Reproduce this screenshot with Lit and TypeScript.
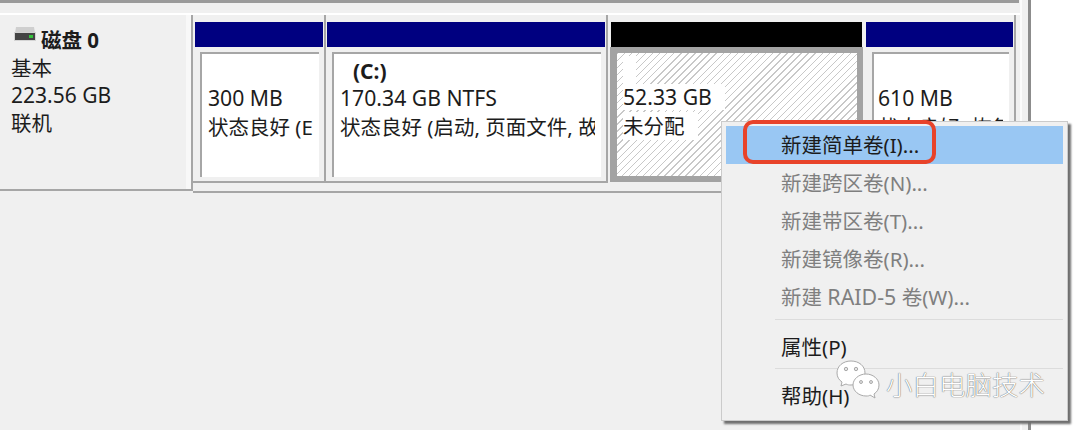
import { LitElement, html, css, nothing } from "lit";
import { customElement } from "lit/decorators.js";

interface Particao {
  classe: string;
  nome?: string;
  tamanho: string;
  estado: string;
}

const PARTICOES: Particao[] = [
  { classe: "p1", tamanho: "300 MB", estado: "状态良好 (EFI" },
  { classe: "p2", nome: "(C:)", tamanho: "170.34 GB NTFS", estado: "状态良好 (启动, 页面文件, 故障" },
  { classe: "p3 livre", tamanho: "52.33 GB", estado: "未分配" },
  { classe: "p4", tamanho: "610 MB", estado: "状态良好 (恢复" },
];

const MENU_NOVO = [
  { texto: html`新建简单卷(I)...`, ativo: true },
  { texto: html`新建跨区卷(N)...`, ativo: false },
  { texto: html`新建带区卷(T)...`, ativo: false },
  { texto: html`新建镜像卷(R)...`, ativo: false },
  { texto: html`新建 <span class="lat">RAID-5</span> 卷(W)...`, ativo: false },
];

@customElement("app-root")
export class AppRoot extends LitElement {
  static styles = css`
    :host {
      display: block;
      width: 1080px;
      height: 430px;
      overflow: hidden;
      background: #fff;
      font-family: "Noto Sans", "Noto Sans CJK SC", sans-serif;
      font-size: 20.5px;
      color: #1c1c1c;
    }

    .janela {
      position: relative;
      box-sizing: border-box;
      width: 1031px;
      height: 430px;
      background: #f0f0f0;
      border-right: 3px solid #8c8c8c;
    }

    .area {
      box-sizing: border-box;
      width: 1022px;
      height: 430px;
      border-right: 2px solid #fbfbfb;
    }

    .topo {
      height: 3px;
      width: 1019px;
      background: #9a9a9a;
    }

    .faixa {
      height: 2px;
      margin-top: 10px;
      background: #fff;
    }

    .disco {
      display: flex;
      align-items: flex-start;
    }

    .info {
      box-sizing: border-box;
      width: 193px;
      height: 176px;
      padding: 11px 0 0 11px;
      border-right: 2px solid #a6a6a6;
      border-bottom: 2px solid #a6a6a6;
      line-height: 28px;
      box-shadow: inset -5px 0 0 #f8f8f8;
    }

    .titulo {
      display: flex;
      align-items: center;
      height: 28px;
      margin-left: 3px;
      font-weight: 700;
      gap: 5px;
    }

    .titulo svg {
      margin-top: -12px;
    }

    .info .num {
      height: 28px;
      margin-top: -1px;
      font-size: 21px;
    }

    .lista {
      display: flex;
      width: 827px;
      height: 176px;
      border-bottom: 2px solid #a6a6a6;
    }

    .particao {
      box-sizing: border-box;
      height: 168px;
      padding-top: 7px;
      border-bottom: 2px solid #a6a6a6;
    }

    .p1 {
      width: 133px;
      padding-left: 2px;
      padding-right: 1px;
      border-right: 2px solid #a6a6a6;
    }

    .p2 {
      width: 282px;
      padding-left: 1px;
      padding-right: 1px;
      border-right: 2px solid #a6a6a6;
    }

    .p3 {
      width: 254px;
      margin-left: 2px;
      padding-left: 1px;
      padding-right: 2px;
    }

    .p4 {
      width: 152px;
      padding-left: 2px;
      padding-right: 1px;
      border-right: 2px solid #a6a6a6;
    }

    .cabeca {
      height: 25px;
      background: #000080;
    }

    .livre .cabeca {
      background: #000;
    }

    .corpo {
      box-sizing: border-box;
      height: 136px;
      padding: 5px 4px 6px 5px;
    }

    .p4 .corpo {
      padding-left: 6px;
    }

    .livre {
      border-bottom: 0;
    }

    .livre .corpo {
      height: 135px;
      margin-left: -1px;
      margin-right: -1px;
      padding: 6px 6px 6px 7px;
      background: #a3a3a3;
    }

    .miolo {
      box-sizing: border-box;
      height: 125px;
      padding: 3px 0 0 6px;
      white-space: nowrap;
      line-height: 28px;
      background: #fff;
      border-top: 2px solid #a6a6a6;
      border-left: 2px solid #a6a6a6;
    }

    .p4 .miolo {
      padding-left: 4px;
    }

    .livre .miolo {
      height: 123px;
      border: 0;
      padding: 3px 0 0 6px;
      background: repeating-linear-gradient(
        135deg,
        #c8c8c8 0,
        #c8c8c8 1px,
        #fff 1px,
        #fff 5px
      );
    }

    .linha {
      height: 28px;
      margin-right: 6px;
      overflow: hidden;
    }

    .nome {
      padding-left: 13px;
      font-size: 21px;
      font-weight: 700;
    }

    .livre .nome {
      padding-left: 0;
    }

    .tam {
      height: 26px;
      margin-bottom: 2px;
      overflow: visible;
      line-height: 26px;
      font-size: 21.2px;
    }

    .livre .tam {
      height: 28px;
      margin-bottom: 0;
    }

    .livre .linha span {
      display: inline-block;
      padding-right: 13px;
      background: #fff;
    }

    .vazio {
      display: block;
      width: 13px;
      height: 28px;
      background: #fff;
    }

    .menu {
      position: absolute;
      left: 721px;
      top: 121px;
      box-sizing: border-box;
      width: 347px;
      height: 300px;
      padding: 4px;
      background: #f0f0f0;
      border: 1px solid #cbcbcb;
      box-shadow: 3px 3px 2px #6f6f6f;
    }

    .item {
      height: 38px;
      padding-left: 55px;
      line-height: 38px;
      white-space: nowrap;
    }

    .item.off {
      color: #7f7f7f;
    }

    .item.on {
      background: #99c7f3;
    }

    .lat {
      font-size: 21.4px;
    }

    .sep {
      height: 1px;
      margin: 3px 0 8px 49px;
      background: #dcdcdc;
    }

    .sep.ultimo {
      margin-top: 2px;
    }

    .realce {
      position: absolute;
      left: 21px;
      top: -2px;
      box-sizing: border-box;
      width: 193px;
      height: 44px;
      border: 4px solid #e8432a;
      border-radius: 10px;
    }

    .marca {
      position: absolute;
      left: 836px;
      top: 360px;
      display: flex;
      align-items: flex-start;
      gap: 4px;
      color: #fff;
      font-size: 26.5px;
      font-weight: 300;
      line-height: 40px;
      white-space: nowrap;
      text-shadow: 0 0 1px #6e6e6e, 0 0 1px #6e6e6e;
    }

    .marca span {
      margin-top: 5px;
    }
  `;

  renderParticao(p: Particao) {
    const livre = p.classe.includes("livre");
    return html`
      <div class="particao ${p.classe}">
        <div class="cabeca"></div>
        <div class="corpo">
          <div class="miolo">
            <div class="linha nome">
              ${p.nome ?? (livre ? html`<i class="vazio"></i>` : nothing)}
            </div>
            <div class="linha tam"><span>${p.tamanho}</span></div>
            <div class="linha"><span>${p.estado}</span></div>
          </div>
        </div>
      </div>
    `;
  }

  render() {
    return html`
      <div class="janela">
        <div class="area">
          <div class="topo"></div>
          <div class="faixa"></div>
          <div class="disco">
            <div class="info">
              <div class="titulo">
                <svg width="22" height="16" viewBox="0 0 22 16">
                  <path d="M2 1h18l1 6H1z" fill="#cfcfcf" />
                  <rect x="0" y="6" width="22" height="9" fill="#d4d4d4" />
                  <rect x="1" y="7" width="20" height="7" fill="#444" />
                  <rect x="15" y="9" width="4" height="3" fill="#35c43c" />
                </svg>
                <span>磁盘 0</span>
              </div>
              <div>基本</div>
              <div class="num">223.56 GB</div>
              <div>联机</div>
            </div>
            <div class="lista">
              ${PARTICOES.map((p) => this.renderParticao(p))}
            </div>
          </div>
        </div>

        <div class="menu">
          ${MENU_NOVO.map(
            (m) => html`<div class="item ${m.ativo ? "on" : "off"}">${m.texto}</div>`
          )}
          <div class="sep"></div>
          <div class="item">属性(P)</div>
          <div class="sep ultimo"></div>
          <div class="item">帮助(H)</div>
          <div class="realce"></div>
        </div>

        <div class="marca">
          <svg width="46" height="44" viewBox="0 0 46 44">
            <g fill="#fff" stroke="#aaa" stroke-width="1">
              <path d="M15 1C7 1 1 6 1 13c0 4 2 7 5 9l-1 4 5-2c2 1 3 1 5 1 8 0 14-5 14-12S23 1 15 1z" />
              <path d="M30 14c-7 0-13 5-13 11s6 11 13 11c2 0 3 0 4-1l5 3-1-4c3-2 5-5 5-9 0-6-6-11-13-11z" />
            </g>
            <g fill="#e4e4e4" stroke="#8c8c8c" stroke-width="0.7">
              <circle cx="10" cy="9" r="1.7" />
              <circle cx="20" cy="9" r="1.7" />
              <circle cx="25" cy="22" r="1.5" />
              <circle cx="35" cy="22" r="1.5" />
            </g>
          </svg>
          <span>小白电脑技术</span>
        </div>
      </div>
    `;
  }
}
